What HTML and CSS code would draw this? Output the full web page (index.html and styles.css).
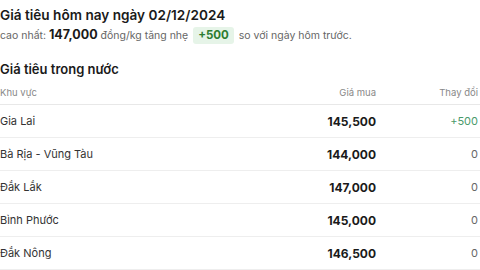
FILE: index.html
```html
<!DOCTYPE html>
<html lang="vi">
<head>
<meta charset="utf-8">
<link rel="stylesheet" href="styles.css">
</head>
<body>
<div class="page">
  <h1 class="title">Giá tiêu hôm nay ngày 02/12/2024</h1>
  <p class="summary">cao nhất: <strong class="hi">147,000</strong> đồng/kg tăng nhẹ <span class="badge">+500</span> so với ngày hôm trước.</p>
  <h2 class="section">Giá tiêu trong nước</h2>
  <table class="prices">
    <thead>
      <tr><th class="c-region">Khu vực</th><th class="c-price">Giá mua</th><th class="c-change">Thay đổi</th></tr>
    </thead>
    <tbody>
      <tr><td class="c-region">Gia Lai</td><td class="c-price">145,500</td><td class="c-change up">+500</td></tr>
      <tr><td class="c-region">Bà Rịa - Vũng Tàu</td><td class="c-price">144,000</td><td class="c-change">0</td></tr>
      <tr><td class="c-region">Đắk Lắk</td><td class="c-price">147,000</td><td class="c-change">0</td></tr>
      <tr><td class="c-region">Bình Phước</td><td class="c-price">145,000</td><td class="c-change">0</td></tr>
      <tr><td class="c-region">Đắk Nông</td><td class="c-price">146,500</td><td class="c-change">0</td></tr>
    </tbody>
  </table>
</div>
</body>
</html>
```
FILE: styles.css
```css
html, body { margin: 0; padding: 0; background: #fff; }
body { font-family: Inter, "Noto Sans", sans-serif; color: #1f2328; }
.page { width: 480px; padding-top: 5px; }
.title { margin: 0; font-size: 13.6px; font-weight: 600; line-height: 20px; color: #1a1a1a; }
.summary { margin: 0; font-size: 10.5px; line-height: 20px; color: #666; }
.hi { font-size: 12.5px; font-weight: 700; color: #1a1a1a; }
.badge { display: inline-block; background: #e6f4e8; color: #2e7d32; font-weight: 700; font-size: 11.5px; line-height: 17px; padding: 0 5px; border-radius: 3px; margin: 0 2px; }
.section { margin: 13px 0 0; font-size: 13px; font-weight: 600; line-height: 20px; color: #1a1a1a; }
.prices { width: 480px; border-collapse: collapse; margin-top: 0; }
.prices th { font-size: 9.5px; font-weight: 400; color: #888; height: 20px; line-height: 12px; vertical-align: bottom; border-bottom: 1px solid #e8e8e8; padding: 0 0 5px; }
.prices td { font-size: 11px; color: #333; height: 32px; border-bottom: 1px solid #eee; padding: 0; }
.c-region { text-align: left; }
.c-price { text-align: right; width: 120px; }
.c-change { text-align: right; width: 102px; padding-right: 2px !important; }
td.c-price { font-weight: 700; font-size: 12px; color: #1a1a1a; }
td.c-change { color: #666; }
td.up { color: #4a9a6a; }
```
